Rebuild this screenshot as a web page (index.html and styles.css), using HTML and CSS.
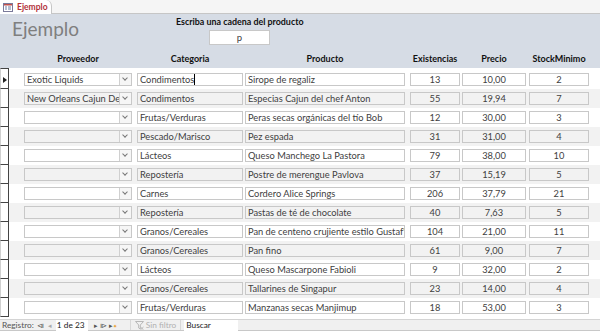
FILE: index.html
```html
<!DOCTYPE html>
<html lang="es">
<head>
<meta charset="utf-8">
<title>Ejemplo</title>
<link rel="stylesheet" href="styles.css">
</head>
<body>
<div class="tabbar">
  <div class="tab">
    <svg class="tab-icon" width="10" height="9" viewBox="0 0 10 9"><rect x="0.5" y="0.5" width="9" height="8" fill="#fff" stroke="#7a7a9a"/><rect x="1" y="1" width="8" height="1.5" fill="#c0504d"/><rect x="2" y="3.5" width="2" height="1" fill="#6b7fa8"/><rect x="5" y="3.5" width="3" height="1" fill="#6b7fa8"/><rect x="2" y="5.5" width="2" height="1" fill="#6b7fa8"/><rect x="5" y="5.5" width="3" height="1" fill="#6b7fa8"/></svg>
    <span class="tab-label">Ejemplo</span>
  </div>
</div>
<div class="form">
  <div class="header">
    <div class="head-top">
      <div class="title">Ejemplo</div>
      <div class="search">
        <div class="search-label">Escriba una cadena del producto</div>
        <div class="search-input">p</div>
      </div>
    </div>
    <div class="colheads">
      <div class="sel-space"></div>
      <div class="ch c-prov">Proveedor</div>
      <div class="ch c-cat">Categoria</div>
      <div class="ch c-prod">Producto</div>
      <div class="ch c-exi">Existencias</div>
      <div class="ch c-pre">Precio</div>
      <div class="ch c-stk">StockMinimo</div>
    </div>
  </div>
  <div class="detail">
    <div class="row"><div class="sel current"><span class="arrow"></span></div><div class="combo c-prov"><span class="ctext">Exotic Liquids</span><span class="drop"></span></div><div class="box c-cat">Condimentos<span class="caret"></span></div><div class="box c-prod">Sirope de regaliz</div><div class="box num c-exi">13</div><div class="box num c-pre">10,00</div><div class="box num c-stk">2</div></div>
    <div class="row alt"><div class="sel"></div><div class="combo c-prov"><span class="ctext">New Orleans Cajun Delights</span><span class="drop"></span></div><div class="box c-cat">Condimentos</div><div class="box c-prod">Especias Cajun del chef Anton</div><div class="box num c-exi">55</div><div class="box num c-pre">19,94</div><div class="box num c-stk">7</div></div>
    <div class="row"><div class="sel"></div><div class="combo c-prov"><span class="ctext"></span><span class="drop"></span></div><div class="box c-cat">Frutas/Verduras</div><div class="box c-prod">Peras secas orgánicas del tío Bob</div><div class="box num c-exi">12</div><div class="box num c-pre">30,00</div><div class="box num c-stk">3</div></div>
    <div class="row alt"><div class="sel"></div><div class="combo c-prov"><span class="ctext"></span><span class="drop"></span></div><div class="box c-cat">Pescado/Marisco</div><div class="box c-prod">Pez espada</div><div class="box num c-exi">31</div><div class="box num c-pre">31,00</div><div class="box num c-stk">4</div></div>
    <div class="row"><div class="sel"></div><div class="combo c-prov"><span class="ctext"></span><span class="drop"></span></div><div class="box c-cat">Lácteos</div><div class="box c-prod">Queso Manchego La Pastora</div><div class="box num c-exi">79</div><div class="box num c-pre">38,00</div><div class="box num c-stk">10</div></div>
    <div class="row alt"><div class="sel"></div><div class="combo c-prov"><span class="ctext"></span><span class="drop"></span></div><div class="box c-cat">Repostería</div><div class="box c-prod">Postre de merengue Pavlova</div><div class="box num c-exi">37</div><div class="box num c-pre">15,19</div><div class="box num c-stk">5</div></div>
    <div class="row"><div class="sel"></div><div class="combo c-prov"><span class="ctext"></span><span class="drop"></span></div><div class="box c-cat">Carnes</div><div class="box c-prod">Cordero Alice Springs</div><div class="box num c-exi">206</div><div class="box num c-pre">37,79</div><div class="box num c-stk">21</div></div>
    <div class="row alt"><div class="sel"></div><div class="combo c-prov"><span class="ctext"></span><span class="drop"></span></div><div class="box c-cat">Repostería</div><div class="box c-prod">Pastas de té de chocolate</div><div class="box num c-exi">40</div><div class="box num c-pre">7,63</div><div class="box num c-stk">5</div></div>
    <div class="row"><div class="sel"></div><div class="combo c-prov"><span class="ctext"></span><span class="drop"></span></div><div class="box c-cat">Granos/Cereales</div><div class="box c-prod">Pan de centeno crujiente estilo Gustaf's</div><div class="box num c-exi">104</div><div class="box num c-pre">21,00</div><div class="box num c-stk">11</div></div>
    <div class="row alt"><div class="sel"></div><div class="combo c-prov"><span class="ctext"></span><span class="drop"></span></div><div class="box c-cat">Granos/Cereales</div><div class="box c-prod">Pan fino</div><div class="box num c-exi">61</div><div class="box num c-pre">9,00</div><div class="box num c-stk">7</div></div>
    <div class="row"><div class="sel"></div><div class="combo c-prov"><span class="ctext"></span><span class="drop"></span></div><div class="box c-cat">Lácteos</div><div class="box c-prod">Queso Mascarpone Fabioli</div><div class="box num c-exi">9</div><div class="box num c-pre">32,00</div><div class="box num c-stk">2</div></div>
    <div class="row alt"><div class="sel"></div><div class="combo c-prov"><span class="ctext"></span><span class="drop"></span></div><div class="box c-cat">Granos/Cereales</div><div class="box c-prod">Tallarines de Singapur</div><div class="box num c-exi">23</div><div class="box num c-pre">14,00</div><div class="box num c-stk">4</div></div>
    <div class="row"><div class="sel"></div><div class="combo c-prov"><span class="ctext"></span><span class="drop"></span></div><div class="box c-cat">Frutas/Verduras</div><div class="box c-prod">Manzanas secas Manjimup</div><div class="box num c-exi">18</div><div class="box num c-pre">53,00</div><div class="box num c-stk">3</div></div>
  </div>
  <div class="navbar">
    <span class="nav-label">Registro:</span>
    <span class="nav-btn first">&#x29CF;</span>
    <span class="nav-btn dim">&#x25C2;</span>
    <span class="nav-pos">1 de 23</span>
    <span class="nav-btn">&#x25B8;</span>
    <span class="nav-btn">&#x29D0;</span>
    <span class="nav-btn new">&#x25B8;<i>&#x2737;</i></span>
    <span class="nav-filter">
      <svg width="9" height="9" viewBox="0 0 9 9"><path d="M0.5 0.5H8.5L5.3 4V8L3.7 7V4Z" fill="none" stroke="#b8b8b8"/><path d="M5.5 6L8.5 8.8M8.5 6L5.5 8.8" stroke="#b8b8b8"/></svg>
      Sin filtro
    </span>
    <span class="nav-search">Buscar</span>
  </div>
  <div class="bottom"></div>
</div>
</body>
</html>
```
FILE: styles.css
```css
* { box-sizing: border-box; }
html, body { margin: 0; padding: 0; }
body {
  width: 600px;
  height: 336px;
  overflow: hidden;
  background: #ffffff;
  font-family: Lato, "Open Sans", sans-serif;
  color: #404040;
}
.tabbar {
  height: 14px;
  background: #f5f5f5;
  border-bottom: 1px solid #c6c6c6;
  display: flex;
  align-items: flex-end;
}
.tab {
  height: 14px;
  width: 52px;
  background: #ffffff;
  border-right: 1px solid #c6c6c6;
  display: flex;
  align-items: center;
  gap: 4px;
  padding-left: 3px;
  margin-bottom: -1px;
  border-top-right-radius: 6px;
}
.tab-icon { display: block; }
.tab-label {
  font-size: 8.5px;
  font-weight: bold;
  color: #b2323a;
}
.form { display: flex; flex-direction: column; }
.header {
  height: 54px;
  background: #d6dce5;
  display: flex;
  flex-direction: column;
}
.head-top {
  height: 36px;
  display: flex;
}
.title {
  width: 176px;
  padding-left: 12px;
  padding-top: 3px;
  font-size: 19px;
  color: #7f7f7f;
}
.search {
  display: flex;
  flex-direction: column;
  padding-top: 2px;
}
.search-label {
  font-size: 8.9px;
  font-weight: bold;
  color: #111;
  height: 13px;
}
.search-input {
  margin-left: 33px;
  margin-top: 1px;
  width: 61px;
  height: 15px;
  background: #fff;
  border: 1px solid #c8c8c8;
  font-size: 9.5px;
  text-align: center;
  line-height: 13px;
  color: #404040;
}
.colheads {
  display: flex;
  align-items: center;
  height: 17px;
  font-size: 9px;
  font-weight: bold;
  color: #111;
}
.ch { text-align: center; }
.sel-space { width: 24px; flex: none; }
.c-prov { width: 108px; flex: none; margin-right: 5px; }
.c-cat { width: 106px; flex: none; margin-right: 2px; }
.c-prod { width: 160px; flex: none; margin-right: 5px; }
.c-exi { width: 50px; flex: none; margin-right: 2px; }
.c-pre { width: 64px; flex: none; margin-right: 3px; }
.c-stk { width: 60px; flex: none; }

.detail {
  display: flex;
  flex-direction: column;
  padding-top: 2px;
  background: linear-gradient(to right, #fff 0, #fff 9px, transparent 9px);
}
.row {
  height: 19px;
  display: flex;
  align-items: center;
  background: #ffffff;
}
.row.alt { background: #f2f2f2; }
.sel {
  width: 9px;
  height: 19px;
  flex: none;
  margin-right: 15px;
  border-left: 1px solid #d0d0d0;
  border-right: 1px solid #444;
  border-bottom: 1px solid #444;
  background: #fff;
  display: flex;
  align-items: center;
  justify-content: center;
}
.detail .row:first-child .sel { border-top: 1px solid #444; height: 21px; margin-top: -2px; padding-top: 2px; }
.arrow {
  width: 0; height: 0;
  border-top: 3px solid transparent;
  border-bottom: 3px solid transparent;
  border-left: 4px solid #222;
}
.box, .combo {
  height: 13px;
  border: 1px solid #c8c8c8;
  background: #fff;
  font-size: 9.3px;
  line-height: 11px;
  padding: 0 2px;
  white-space: nowrap;
  overflow: hidden;
  color: #404040;
}
.row.alt .box, .row.alt .combo { background: #f2f2f2; }
.num { text-align: center; }
.combo {
  display: flex;
  padding-right: 0;
}
.ctext { flex: 1; overflow: hidden; }
.drop {
  width: 12px;
  flex: none;
  border-left: 1px solid #d0d0d0;
  position: relative;
  background: #f6f6f6;
}
.drop::after {
  content: "";
  position: absolute;
  left: 3px;
  top: 2px;
  width: 3px;
  height: 3px;
  border-right: 1px solid #777;
  border-bottom: 1px solid #777;
  transform: rotate(45deg);
}
.caret {
  display: inline-block;
  width: 1px;
  height: 11px;
  background: #000;
  vertical-align: top;
}
.navbar {
  height: 12px;
  margin-top: 2px;
  border-top: 1px solid #d4d4d4;
  border-bottom: 1px solid #c8c8c8;
  background: #f0f0f0;
  display: flex;
  align-items: center;
  font-size: 8.3px;
  color: #555;
}
.nav-label { margin-left: 2px; margin-right: 3px; }
.nav-btn { font-size: 7px; color: #555; width: 8px; text-align: center; }
.nav-btn.first { margin-right: 1px; }
.nav-btn.dim { color: #aaa; }
.nav-btn.new { width: 10px; }
.nav-btn.new i { color: #e8a030; font-style: normal; font-size: 5px; }
.nav-pos {
  background: #fff;
  width: 32px;
  height: 11px;
  line-height: 11px;
  margin: 0 4px 0 2px;
  padding-left: 1px;
  color: #222;
}
.nav-filter {
  margin-left: 12px;
  color: #b0b0b0;
  display: flex;
  align-items: center;
  gap: 2px;
  padding: 0 4px;
  border-left: 1px solid #d8d8d8;
  border-right: 1px solid #d8d8d8;
}
.nav-search {
  margin-left: 3px;
  background: #fff;
  width: 54px;
  height: 11px;
  line-height: 11px;
  padding-left: 2px;
  color: #222;
}
.bottom { flex: 1; height: 10px; background: #f0f0f0; }
```
